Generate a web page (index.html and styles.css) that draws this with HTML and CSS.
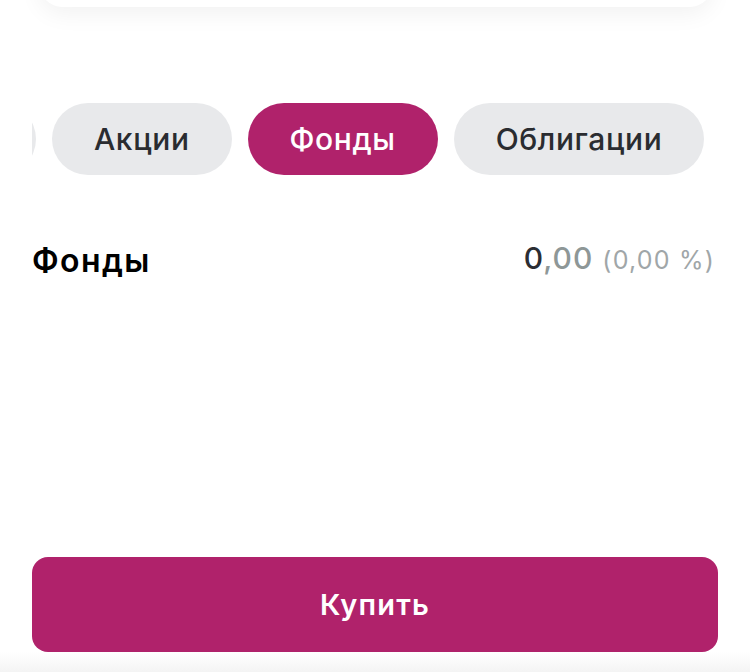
FILE: index.html
```html
<!DOCTYPE html>
<html lang="ru">
<head>
<meta charset="utf-8">
<link rel="stylesheet" href="styles.css">
</head>
<body>
<div class="page">
  <div class="top-card"></div>
  <div class="tabs">
    <div class="tabs-track">
      <div class="pill pill-hidden" aria-hidden="true"></div>
      <div class="pill">Акции</div>
      <div class="pill pill-active">Фонды</div>
      <div class="pill">Облигации</div>
    </div>
  </div>
  <div class="summary">
    <div class="summary-title">Фонды</div>
    <div class="summary-value"><span class="v-int">0</span><span class="v-frac">,00</span> <span class="v-pct">(0,00 %)</span></div>
  </div>
  <div class="spacer"></div>
  <div class="action">
    <button class="buy">Купить</button>
  </div>
  <div class="bottom-strip"></div>
</div>
</body>
</html>
```

FILE: styles.css
```css
* { box-sizing: border-box; }
html, body {
  margin: 0;
  padding: 0;
  background: #ffffff;
}
body {
  font-family: Inter, Roboto, "Noto Sans", sans-serif;
  width: 750px;
  height: 672px;
  overflow: hidden;
}
.page {
  display: flex;
  flex-direction: column;
  height: 672px;
}
.top-card {
  margin: -60px 38px 0 40px;
  height: 67px;
  flex: 0 0 auto;
  background: #fff;
  border-radius: 0 0 22px 22px;
  box-shadow: 0 6px 24px rgba(0,0,0,0.06);
}
.tabs {
  margin: 96px 0 0 32px;
  overflow: hidden;
  flex: 0 0 auto;
}
.tabs-track {
  display: flex;
  gap: 16px;
  margin-left: -120px;
}
.pill {
  flex: 0 0 auto;
  height: 72px;
  border-radius: 36px;
  background: #e8e9eb;
  color: #2a2c30;
  font-size: 30px;
  font-weight: 500;
  letter-spacing: 0.6px;
  display: flex;
  align-items: center;
  justify-content: center;
  padding: 0 42px;
}
.pill-hidden { width: 124px; padding: 0; }
.pill-active {
  background: #b0226b;
  color: #ffffff;
}
.summary {
  display: flex;
  justify-content: space-between;
  align-items: baseline;
  margin: 66px 35px 0 32px;
}
.summary-title {
  font-size: 32px;
  font-weight: 600;
  letter-spacing: 1.4px;
  color: #000;
}
.summary-value {
  font-size: 30px;
  font-weight: 500;
  letter-spacing: 1px;
  position: relative;
  top: -3px;
}
.v-int { color: #2b2d33; }
.v-frac { color: #8e9797; }
.v-pct {
  font-size: 25px;
  font-weight: 400;
  letter-spacing: 1.2px;
  color: #a0a6a8;
}
.spacer { flex: 1 1 auto; }
.action {
  padding: 0 32px;
  flex: 0 0 auto;
}
.buy {
  display: block;
  width: 686px;
  height: 95px;
  border: none;
  border-radius: 16px;
  background: #b0226b;
  color: #ffffff;
  font-family: inherit;
  font-size: 29px;
  font-weight: 600;
  letter-spacing: 1.2px;
  margin: 0;
}
.bottom-strip {
  flex: 0 0 auto;
  height: 20px;
  background: linear-gradient(#ffffff, #f4f4f4);
}
```
